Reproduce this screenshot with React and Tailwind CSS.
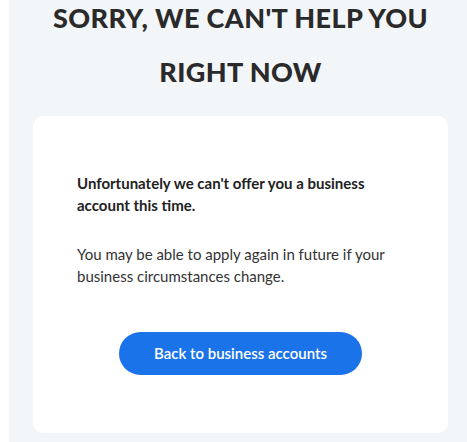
import React from 'react';

const App = () => {
  return (
    <div className="w-[467px] h-[442px] overflow-hidden bg-white pl-[9px] font-['Lato',sans-serif]">
      <div className="h-full bg-[#f3f6f9] pl-[24px] pr-[19px] flex flex-col">
        <h1 className="-mt-[9px] text-center text-[27px] leading-[54px] font-black text-[#2a2a2a] tracking-[0.4px]">
          SORRY, WE CAN'T HELP YOU
          <br />
          RIGHT NOW
        </h1>

        <div className="mt-[17px] bg-white rounded-[10px] pt-[56px] pb-[58px] px-[44px]">
          <p className="text-[15px] leading-[22px] font-bold text-[#222]">
            Unfortunately we can't offer you a business account this time.
          </p>
          <p className="mt-[27px] text-[15px] leading-[22px] text-[#333]">
            You may be able to apply again in future if your business circumstances change.
          </p>
          <div className="mt-[45px] flex justify-center">
            <button className="w-[243px] h-[43px] rounded-full bg-[#1a73e8] text-white text-[15px] font-semibold">
              Back to business accounts
            </button>
          </div>
        </div>
      </div>
    </div>
  );
};

export default App;
